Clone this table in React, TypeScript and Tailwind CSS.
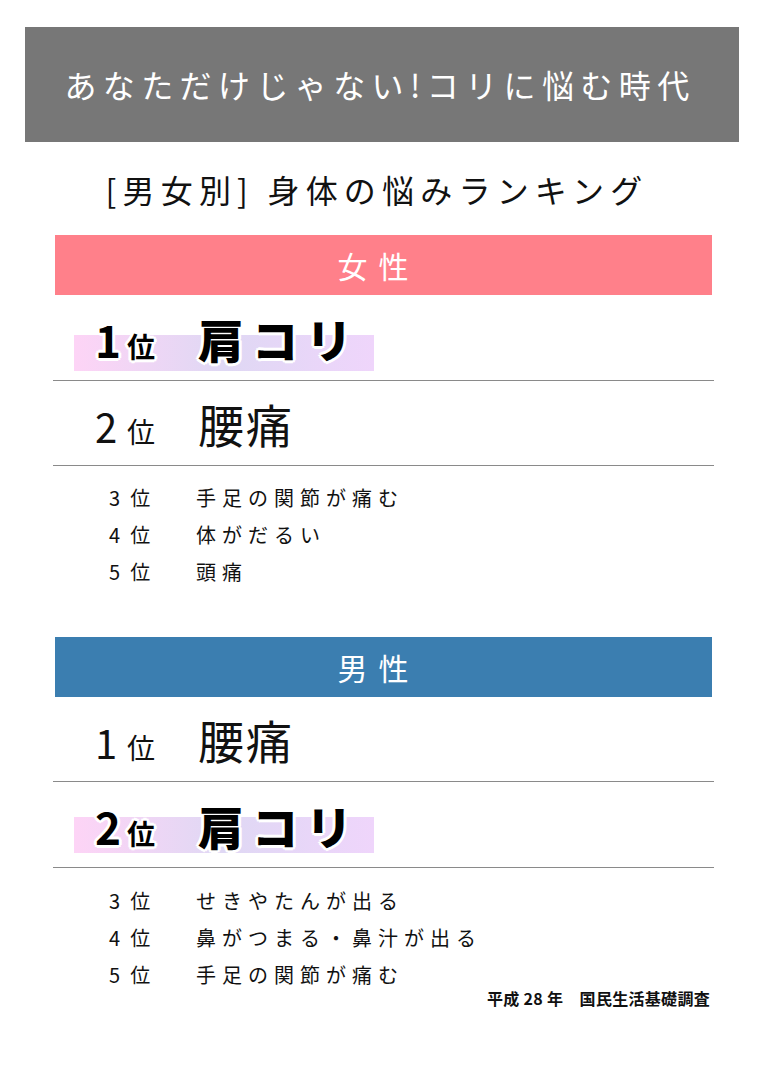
const jp = "font-['Noto_Sans_CJK_JP','Noto_Sans',sans-serif]";

const outline =
  "[text-shadow:2px_0_0_#fff,-2px_0_0_#fff,0_2px_0_#fff,0_-2px_0_#fff,2px_2px_0_#fff,-2px_-2px_0_#fff,2px_-2px_0_#fff,-2px_2px_0_#fff,3px_0_0_#fff,-3px_0_0_#fff,0_3px_0_#fff,0_-3px_0_#fff]";

type Rank = { rank: string; text: string };

function TopRank({ rank, text, barTop }: { rank: string; text: string; barTop: string }) {
  return (
    <div className="relative flex h-[86px] items-center border-b border-[#8a8a8a] -mx-[2px] px-[2px]">
      <div className={`absolute left-[21px] h-[36px] w-[300px] bg-gradient-to-r from-[#fdd4f6] via-[#dfd8f4] to-[#efd5fb] ${barTop}`} />
      <div className={`relative flex items-baseline pl-[40px] text-black ${outline}`}>
        <span className="w-[32px] text-[44px] leading-none font-bold">{rank}</span>
        <span className="w-[71px] text-[28px] leading-none font-bold">位</span>
        <span className="text-[46px] leading-none font-black tracking-[8px]">{text}</span>
      </div>
    </div>
  );
}

function PlainRank({ rank, text }: { rank: string; text: string }) {
  return (
    <div className="flex h-[85px] items-center border-b border-[#8a8a8a] -mx-[2px] px-[2px]">
      <div className="flex items-baseline pl-[40px] text-[#111]">
        <span className="w-[32px] text-[40px] leading-none">{rank}</span>
        <span className="w-[71px] text-[28px] leading-none">位</span>
        <span className="text-[46px] leading-none tracking-[2px]">{text}</span>
      </div>
    </div>
  );
}

function RankList({ items, className }: { items: Rank[]; className: string }) {
  return (
    <ul className={`pl-[54px] text-[20px] leading-[37px] text-[#111] ${className}`}>
      {items.map((item) => (
        <li key={item.rank} className="flex">
          <span className="w-[87px] tracking-[2.8px]">{item.rank} 位</span>
          <span className="tracking-[6px]">{item.text}</span>
        </li>
      ))}
    </ul>
  );
}

function Section({
  label,
  color,
  children,
}: {
  label: string;
  color: string;
  children: React.ReactNode;
}) {
  return (
    <section>
      <div className={`flex h-[60px] items-center justify-center ${color}`}>
        <span className="pr-[10px] text-[30px] tracking-[11px] text-white">{label}</span>
      </div>
      {children}
    </section>
  );
}

export default function App() {
  return (
    <div className={`h-[1075px] w-[768px] bg-white pt-[27px] ${jp}`}>
      <header className="mx-[25px] flex h-[115px] w-[714px] items-center justify-center bg-[#777777]">
        <h1 className="pb-[2px] pr-[4px] text-[32px] leading-none tracking-[6.4px] text-white">
          あなただけじゃない!コリに悩む時代
        </h1>
      </header>

      <h2 className="flex h-[93px] items-center justify-center pr-[14px] text-[32px] leading-none tracking-[6.2px] text-[#111]">
        [男女別] 身体の悩みランキング
      </h2>

      <main className="mx-[55px] w-[657px]">
        <Section label="女性" color="bg-[#ff808a]">
          <TopRank rank="1" text="肩コリ" barTop="top-[40px]" />
          <PlainRank rank="2" text="腰痛" />
          <RankList
            className="pt-[13px]"
            items={[
              { rank: "3", text: "手足の関節が痛む" },
              { rank: "4", text: "体がだるい" },
              { rank: "5", text: "頭痛" },
            ]}
          />
        </Section>

        <div className="h-[47px]" />

        <Section label="男性" color="bg-[#3b7eb0]">
          <PlainRank rank="1" text="腰痛" />
          <TopRank rank="2" text="肩コリ" barTop="top-[35px]" />
          <RankList
            className="pt-[14px]"
            items={[
              { rank: "3", text: "せきやたんが出る" },
              { rank: "4", text: "鼻がつまる・鼻汁が出る" },
              { rank: "5", text: "手足の関節が痛む" },
            ]}
          />
        </Section>

        <p className="-mt-[3px] pr-[2px] text-right text-[16px] leading-[16px] font-bold tracking-[0.3px] text-[#111]">
          平成 28 年　国民生活基礎調査
        </p>
      </main>
    </div>
  );
}
